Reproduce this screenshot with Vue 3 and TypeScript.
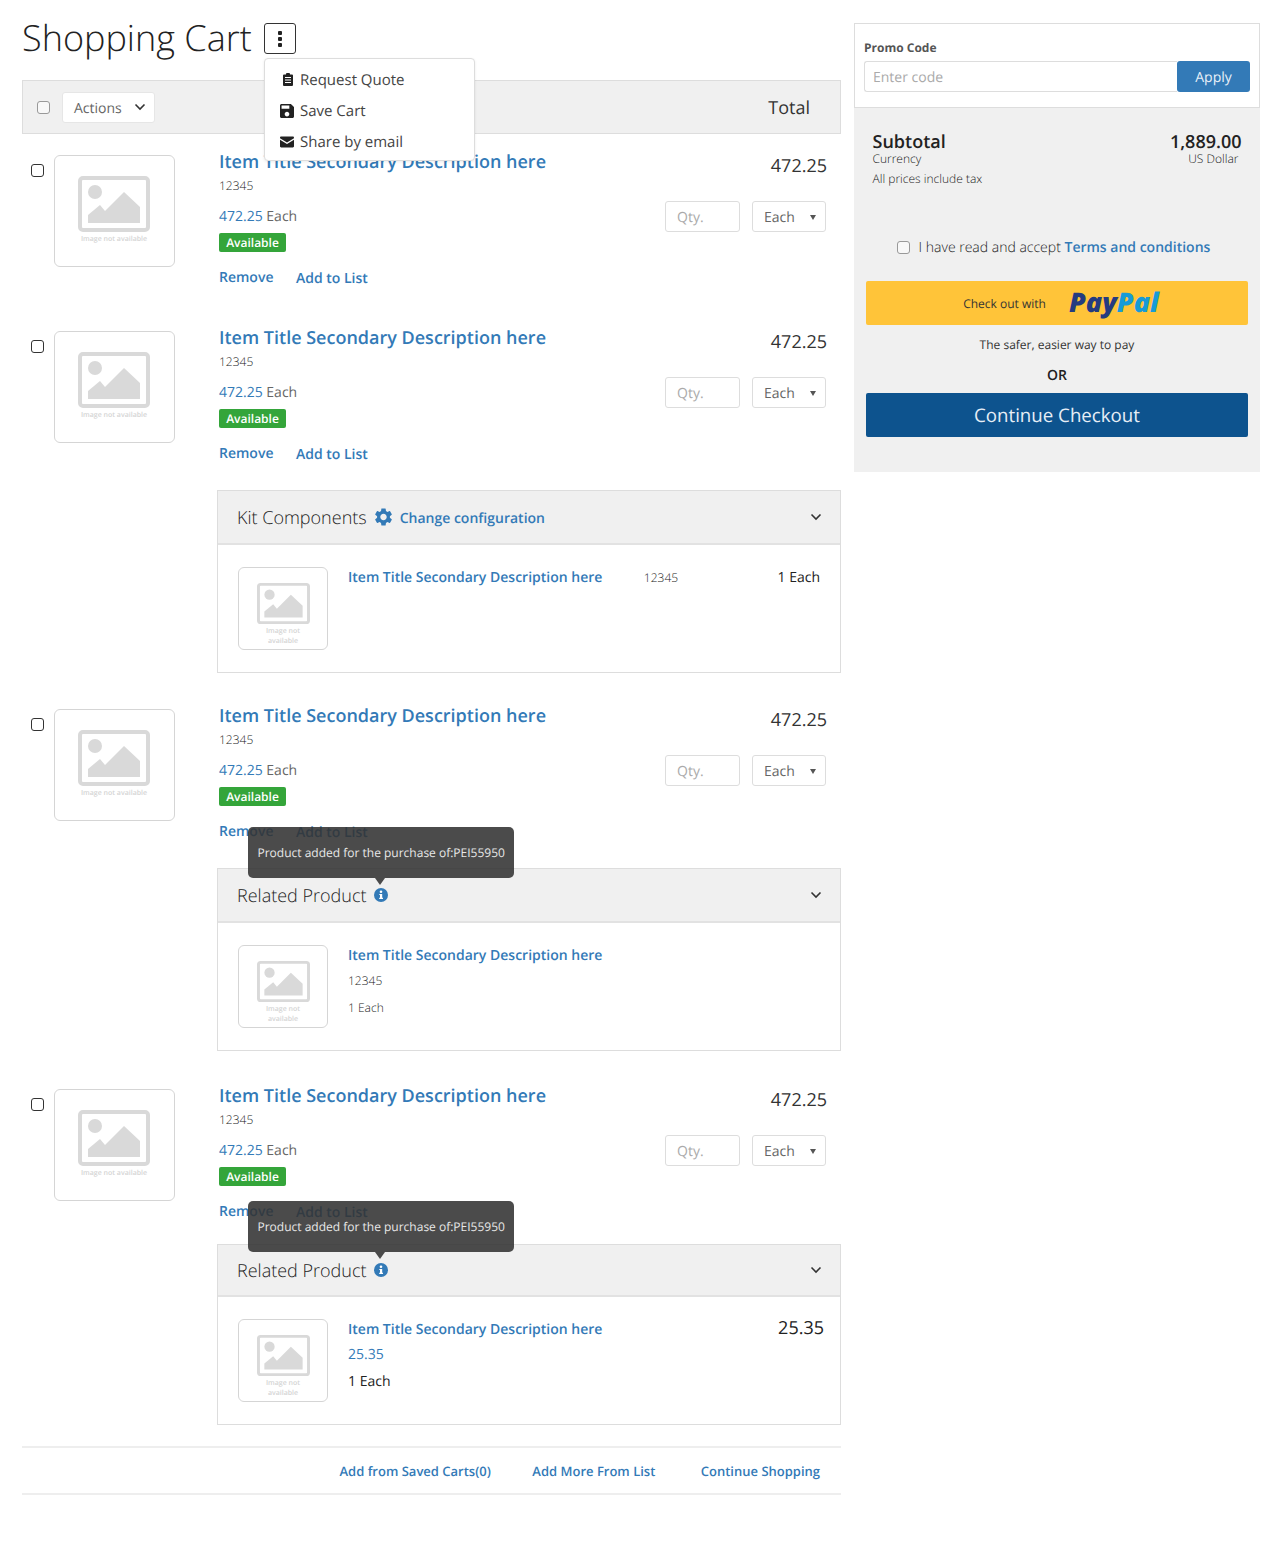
<script setup lang="ts">
type PanelRow = { id: string; lines: string[]; sku?: string; each?: string; price?: string }
type Panel = {
  kind: 'kit' | 'related' | 'priced'
  label: string
  row: PanelRow
}
type CartItem = { id: number; panel?: Panel }

const title = 'Item Title Secondary Description here'
const tipText = 'Product added for the purchase of:PEI55950'

const items: CartItem[] = [
  { id: 1 },
  {
    id: 2,
    panel: { kind: 'kit', label: 'Kit Components', row: { id: 'k', lines: [], sku: '12345', each: '1 Each' } },
  },
  {
    id: 3,
    panel: { kind: 'related', label: 'Related Product', row: { id: 'r', lines: ['12345', '1 Each'] } },
  },
  {
    id: 4,
    panel: { kind: 'priced', label: 'Related Product', row: { id: 'p', lines: ['25.35', '1 Each'], price: '25.35' } },
  },
]

const menu = ['Request Quote', 'Save Cart', 'Share by email']
const footerLinks = ['Add from Saved Carts(0)', 'Add More From List', 'Continue Shopping']
</script>

<template>
  <div class="page">
    <main class="cart">
      <header class="head">
        <h1>Shopping Cart</h1>
        <div class="menu-wrap">
          <button class="kebab" type="button" aria-label="More">
            <i /><i /><i />
          </button>
          <ul class="menu">
            <li v-for="(m, i) in menu" :key="m">
              <svg v-if="i === 0" class="mi mi-clip" viewBox="0 0 10 13">
                <path fill="#222" fill-rule="evenodd" d="M1 1.5h2V1a1 1 0 0 1 1-1h2a1 1 0 0 1 1 1v.5h2a1 1 0 0 1 1 1V12a1 1 0 0 1-1 1H1a1 1 0 0 1-1-1V2.500a1 1 0 0 1 1-1zM2 4v1h6V4zm0 2.500v1h6v-1zM2 9v1h6V9z" />
              </svg>
              <svg v-else-if="i === 1" class="mi" viewBox="3 3 18 18">
                <path fill="#222" d="M17 3H5c-1.110 0-2 .9-2 2v14c0 1.100.89 2 2 2h14c1.100 0 2-.9 2-2V7l-4-4zm-5 16c-1.660 0-3-1.340-3-3s1.340-3 3-3 3 1.340 3 3-1.340 3-3 3zm3-10H5V5h10v4z" />
              </svg>
              <svg v-else class="mi" viewBox="0 0 14 11">
                <path fill="#222" d="M1.200 0h11.600C13.500 0 14 .5 14 1.200v.5L7 6 0 1.700v-.5C0 .5.500 0 1.200 0zM0 3.300 7 7.600l7-4.300v6.500c0 .7-.5 1.200-1.200 1.200H1.200C.5 11 0 10.500 0 9.800z" />
              </svg>
              <span>{{ m }}</span>
            </li>
          </ul>
        </div>
      </header>

      <div class="toolbar">
        <input class="check check-soft" type="checkbox" />
        <div class="actions">
          <span>Actions</span>
          <svg class="chev" viewBox="0 0 12 8"><path d="M1.500 1.500 6 6l4.500-4.500" /></svg>
        </div>
        <span class="total-label">Total</span>
      </div>

      <template v-for="item in items" :key="item.id">
        <article class="item">
          <input class="check" type="checkbox" />
          <div class="thumb">
            <svg class="ph" viewBox="0 0 72 56">
              <rect x="2" y="2" width="68" height="52" rx="3" fill="none" stroke="#d9d9d9" stroke-width="4" />
              <circle cx="17" cy="16" r="7" fill="#d9d9d9" />
              <path fill="#d9d9d9" d="M10 47v-8l12-10 5 6 19-19 16 15v16z" />
            </svg>
            <span class="ph-text">Image not available</span>
          </div>
          <div class="info">
            <a class="item-title">{{ title }}</a>
            <div class="sku">12345</div>
            <div class="unit"><a>472.25</a> Each</div>
            <span class="badge">Available</span>
            <div class="links">
              <a class="remove">Remove</a>
              <a class="add">Add to List</a>
            </div>
          </div>
          <div class="side">
            <div class="line-total">472.25</div>
            <div class="controls">
              <input class="qty" type="text" placeholder="Qty." />
              <div class="uom">Each<b /></div>
            </div>
          </div>
        </article>

        <section v-if="item.panel" class="panel" :class="'panel-' + item.panel.kind">
          <div class="panel-head">
            <span class="panel-label">{{ item.panel.label }}</span>
            <template v-if="item.panel.kind === 'kit'">
              <svg class="gear" viewBox="2.500 2 19 20">
                <path fill="#337ab7" d="M19.140 12.940c.04-.3.06-.61.06-.94 0-.32-.02-.64-.07-.94l2.030-1.580a.49.49 0 0 0 .12-.61l-1.920-3.320a.488.488 0 0 0-.59-.22l-2.390.96c-.5-.38-1.030-.7-1.620-.94l-.36-2.540a.484.484 0 0 0-.48-.41h-3.840c-.24 0-.43.17-.47.41l-.36 2.540c-.59.24-1.130.57-1.620.94l-2.390-.96c-.22-.08-.47 0-.59.22L2.740 8.870c-.12.21-.08.47.12.61l2.030 1.580c-.05.3-.09.63-.09.94s.02.64.07.94l-2.030 1.580a.49.49 0 0 0-.12.61l1.920 3.320c.12.22.37.29.59.22l2.390-.96c.5.38 1.030.7 1.620.94l.36 2.540c.05.24.24.41.48.41h3.840c.24 0 .44-.17.47-.41l.36-2.540c.59-.24 1.130-.56 1.620-.94l2.390.96c.22.08.47 0 .59-.22l1.920-3.320c.12-.22.07-.47-.12-.61l-2.010-1.580zM12 15.600c-1.980 0-3.600-1.620-3.600-3.600s1.620-3.600 3.600-3.600 3.600 1.620 3.600 3.600-1.620 3.600-3.600 3.600z" />
              </svg>
              <a class="change">Change configuration</a>
            </template>
            <template v-else>
              <svg class="info-icon" viewBox="0 0 14 14">
                <circle cx="7" cy="7" r="7" fill="#337ab7" />
                <circle cx="7" cy="3.800" r="1.300" fill="#fff" />
                <path fill="#fff" d="M5.300 5.900h2.900v3.900h.8V11H5.200V9.800H6V7.100h-.7z" />
              </svg>
              <div class="tip">{{ tipText }}</div>
            </template>
            <svg class="chev chev-panel" viewBox="0 0 12 8"><path d="M1.500 1.500 6 6l4.500-4.500" /></svg>
          </div>
          <div class="panel-body">
            <div class="thumb thumb-sm">
              <svg class="ph" viewBox="0 0 72 56">
                <rect x="2" y="2" width="68" height="52" rx="3" fill="none" stroke="#d9d9d9" stroke-width="4" />
                <circle cx="17" cy="16" r="7" fill="#d9d9d9" />
                <path fill="#d9d9d9" d="M10 47v-8l12-10 5 6 19-19 16 15v16z" />
              </svg>
              <span class="ph-text">Image not available</span>
            </div>
            <div class="sub-info">
              <a class="sub-title">{{ title }}</a>
              <div v-for="(line, i) in item.panel.row.lines" :key="i" class="sub-line">{{ line }}</div>
            </div>
            <span v-if="item.panel.row.sku" class="sub-sku">{{ item.panel.row.sku }}</span>
            <span v-if="item.panel.row.each" class="sub-each">{{ item.panel.row.each }}</span>
            <span v-if="item.panel.row.price" class="sub-price">{{ item.panel.row.price }}</span>
          </div>
        </section>
      </template>

      <footer class="foot">
        <a v-for="l in footerLinks" :key="l">{{ l }}</a>
      </footer>
    </main>

    <aside class="summary">
      <div class="promo">
        <label class="promo-label">Promo Code</label>
        <div class="promo-row">
          <input type="text" placeholder="Enter code" />
          <button type="button">Apply</button>
        </div>
      </div>
      <div class="totals">
        <div class="sub-row">
          <div>
            <div class="sub-name">Subtotal</div>
            <div class="small">Currency</div>
          </div>
          <div class="right">
            <div class="sub-amt">1,889.00</div>
            <div class="small">US Dollar</div>
          </div>
        </div>
        <div class="small tax">All prices include tax</div>
        <label class="terms">
          <input class="check check-soft" type="checkbox" />
          <span>I have read and accept <a>Terms and conditions</a></span>
        </label>
        <button class="paypal" type="button">
          <span class="pp-text">Check out with</span>
          <span class="pp-logo"><em>Pay</em><em class="pal">Pal</em></span>
        </button>
        <p class="safer">The safer, easier way to pay</p>
        <p class="or">OR</p>
        <button class="checkout" type="button">Continue Checkout</button>
      </div>
    </aside>
  </div>
</template>

<style>
body {
  background: #fff;
}
</style>

<style scoped>
.page {
  display: flex;
  align-items: flex-start;
  gap: 13px;
  min-height: 1549px;
  box-sizing: border-box;
  padding-left: 22px;
  font-family: 'Open Sans', 'Liberation Sans', sans-serif;
  font-size: 14px;
  color: #555;
  text-rendering: geometricPrecision;
}

input,
button {
  text-rendering: geometricPrecision;
}

a {
  color: #337ab7;
}

.cart {
  width: 819px;
  flex: none;
}

.head {
  display: flex;
  align-items: flex-start;
  height: 80px;
}

h1 {
  flex: none;
  width: 229px;
  margin: 15px 0 0;
  font-size: 36px;
  line-height: 46px;
  font-weight: 300;
  color: #222;
  white-space: nowrap;
}

.menu-wrap {
  position: relative;
  margin: 23px 0 0 13px;
}

.kebab {
  display: flex;
  flex-direction: column;
  align-items: center;
  justify-content: center;
  gap: 2px;
  width: 32px;
  height: 31px;
  padding: 0;
  border: 1px solid #333;
  border-radius: 3px;
  background: #fff;
}

.kebab i {
  width: 4px;
  height: 4px;
  border-radius: 1px;
  background: #222;
}

.menu {
  position: absolute;
  z-index: 5;
  top: 35px;
  left: 0;
  box-sizing: border-box;
  width: 211px;
  height: 103px;
  margin: 0;
  padding: 5px 0 0 15px;
  list-style: none;
  background: #fff;
  border: 1px solid #ddd;
  border-radius: 4px;
  box-shadow: 0 1px 3px rgba(0, 0, 0, 0.08);
}

.menu li {
  display: flex;
  align-items: center;
  height: 31px;
  font-size: 15px;
  color: #444;
}

.mi {
  width: 14px;
  height: 14px;
  margin-right: 6px;
  flex: none;
}

.mi-clip {
  width: 10px;
  height: 13px;
  margin: 0 7px 0 3px;
}

.toolbar {
  display: flex;
  align-items: center;
  height: 54px;
  box-sizing: border-box;
  padding: 0 30px 0 14px;
  background: #f0f0f0;
  border: 1px solid #ddd;
}

.check {
  appearance: none;
  flex: none;
  width: 13px;
  height: 13px;
  margin: 0;
  background: #fff;
  border: 1.5px solid #333;
  border-radius: 3px;
}

.check-soft {
  border: 1px solid #999;
  background: #f8f8f8;
}

.actions {
  display: flex;
  align-items: center;
  justify-content: space-between;
  box-sizing: border-box;
  width: 93px;
  height: 31px;
  margin-left: 12px;
  padding: 0 8px 0 11px;
  background: #fff;
  border: 1px solid #e6e6e6;
  border-radius: 3px;
  color: #666;
}

.actions span {
  margin-top: 2px;
}

.chev {
  width: 12px;
  height: 8px;
  fill: none;
  stroke: #333;
  stroke-width: 1.6;
}

.total-label {
  margin: 2px 0 0 auto;
  font-size: 18px;
  color: #333;
}

.item {
  display: flex;
  box-sizing: border-box;
  height: 176px;
  padding: 21px 15px 0 9px;
}

.item > .check {
  margin-top: 9px;
}

.thumb {
  position: relative;
  display: flex;
  flex-direction: column;
  align-items: center;
  flex: none;
  box-sizing: border-box;
  width: 121px;
  height: 112px;
  margin-left: 9.5px;
  padding-top: 20px;
  background: #fff;
  border: 1px solid #d5d5d5;
  border-radius: 6px;
}

.ph {
  width: 72px;
  height: 56px;
}

.ph-text {
  margin-top: 3px;
  font-size: 7px;
  line-height: 10px;
  font-weight: 600;
  color: #d4d4d4;
  text-align: center;
}

.thumb-sm {
  width: 90px;
  height: 83px;
  margin-left: 0;
  padding-top: 14px;
}

.thumb-sm .ph {
  width: 53px;
  height: 43px;
}

.thumb-sm .ph-text {
  width: 60px;
  margin-top: 2px;
  line-height: 10px;
}

.info {
  flex: 1;
  margin-left: 44.5px;
}

.item-title {
  display: block;
  font-size: 18px;
  line-height: 14px;
  margin-top: 0;
  font-weight: 600;
}

.sku {
  margin-top: 9px;
  font-size: 12px;
  line-height: 16px;
  font-weight: 300;
  color: #222;
}

.unit {
  margin-top: 13px;
  line-height: 20px;
  color: #666;
}

.badge {
  display: block;
  width: 67px;
  height: 19px;
  margin-top: 6px;
  background: #34a53a;
  border-radius: 2px;
  color: #fff;
  font-size: 12px;
  line-height: 20px;
  font-weight: 600;
  text-align: center;
}

.links {
  display: flex;
  gap: 22.5px;
  margin-top: 16px;
  font-weight: 600;
  line-height: 20px;
}

.add {
  margin-top: 1px;
}

.side {
  flex: none;
  text-align: right;
}

.line-total {
  margin-top: 1px;
  margin-right: -1px;
  font-size: 18px;
  line-height: 20px;
  color: #333;
}

.controls {
  display: flex;
  gap: 12px;
  margin-top: 25px;
}

.qty {
  box-sizing: border-box;
  width: 75px;
  height: 31px;
  padding: 2px 11px 0;
  background: #fff;
  border: 1px solid #ddd;
  border-radius: 3px;
  font: inherit;
}

.qty::placeholder,
.promo-row input::placeholder {
  color: #aaa;
  opacity: 1;
}

.uom {
  display: flex;
  align-items: center;
  justify-content: space-between;
  box-sizing: border-box;
  width: 74px;
  height: 31px;
  padding: 2px 9px 0 11px;
  background: #fff;
  border: 1px solid #ddd;
  border-radius: 3px;
  color: #666;
}

.uom b {
  border: 3px solid transparent;
  border-top: 5px solid #555;
  border-bottom: 0;
}

.panel {
  width: 624px;
  box-sizing: border-box;
  margin-left: 195px;
  background: #fff;
  border: 1px solid #ddd;
}

.panel-kit {
  margin-top: 4px;
  margin-bottom: 15px;
  height: 183px;
}

.panel-related {
  margin-top: 4px;
  margin-bottom: 17px;
  height: 183px;
}

.panel-priced {
  height: 181px;
  margin-bottom: 21px;
}

.panel-head {
  position: relative;
  display: flex;
  align-items: center;
  box-sizing: border-box;
  height: 54px;
  padding: 0 19px;
  background: #f0f0f0;
  border-bottom: 2px solid #e2e2e2;
}

.panel-priced .panel-head {
  height: 52px;
}

.panel-label {
  margin-top: 2px;
  font-size: 18px;
  font-weight: 300;
  color: #222;
}

.gear {
  width: 17px;
  height: 18px;
  margin-left: 8px;
}

.change {
  margin: 2px 0 0 8px;
  font-weight: 600;
}

.info-icon {
  width: 14px;
  height: 14px;
  margin-left: 7px;
}

.tip {
  position: absolute;
  z-index: 3;
  top: -42px;
  left: 30px;
  box-sizing: border-box;
  width: 266px;
  height: 51px;
  padding: 16px 9.5px 0;
  background: rgba(50, 50, 50, 0.88);
  border-radius: 5px;
  color: #e8e8e8;
  font-size: 12px;
  line-height: 20px;
  white-space: nowrap;
}

.panel-priced .tip {
  top: -44px;
  padding-top: 16px;
}

.tip::after {
  content: '';
  position: absolute;
  top: 100%;
  left: 127px;
  border: 5px solid transparent;
  border-top: 7px solid rgba(50, 50, 50, 0.88);
  border-bottom: 0;
}

.chev-panel {
  margin-left: auto;
  margin-right: -1px;
}

.panel-body {
  display: flex;
  align-items: flex-start;
  padding: 22px 20px 0;
}

.sub-info {
  margin-left: 20px;
  padding-top: 1px;
}

.sub-title {
  display: block;
  font-weight: 600;
  line-height: 20px;
}

.sub-line {
  margin-top: 7px;
  font-size: 12px;
  line-height: 20px;
  font-weight: 300;
  color: #222;
}

.sub-line:first-of-type {
  margin-top: 5px;
}

.panel-priced .sub-line {
  font-size: 14px;
  font-weight: 400;
  color: #222;
}

.panel-priced .sub-line:first-of-type {
  color: #337ab7;
}

.sub-sku {
  margin: 1px 0 0 41.5px;
  font-size: 12px;
  line-height: 20px;
  font-weight: 300;
  color: #222;
}

.sub-each {
  margin: 1px 0 0 auto;
  line-height: 20px;
  color: #222;
}

.sub-price {
  margin: -1px -4px 0 auto;
  font-size: 18px;
  line-height: 20px;
  color: #222;
}

.foot {
  display: flex;
  justify-content: flex-end;
  align-items: center;
  gap: 41.5px;
  box-sizing: border-box;
  height: 49px;
  padding: 1px 21px 0 0;
  border-top: 2px solid #eee;
  border-bottom: 2px solid #eee;
  font-weight: 600;
  font-size: 13px;
}

.foot a:last-child {
  margin-left: 4px;
}

.summary {
  flex: none;
  width: 406px;
  margin-top: 23px;
}

.promo {
  box-sizing: border-box;
  height: 85px;
  padding: 17px 9px 0;
  background: #fff;
  border: 1px solid #ddd;
}

.promo-label {
  display: block;
  font-size: 12px;
  line-height: 14px;
  font-weight: 700;
  color: #555;
}

.promo-row {
  display: flex;
  margin-top: 6px;
}

.promo-row input {
  flex: 1;
  min-width: 0;
  box-sizing: border-box;
  height: 31px;
  padding: 2px 8px 0;
  background: #fff;
  border: 1px solid #ddd;
  border-right: 0;
  border-radius: 3px 0 0 3px;
  font: inherit;
}

.promo-row button {
  width: 73px;
  height: 31px;
  padding: 2px 0 0;
  background: #337ab7;
  border: 0;
  border-radius: 3px;
  color: #e8f0f8;
  font: inherit;
}

.totals {
  box-sizing: border-box;
  height: 364px;
  padding: 24px 12px 0;
  background: #f0f0f0;
}

.sub-row {
  display: flex;
  justify-content: space-between;
  padding: 0 6.5px;
}

.sub-name,
.sub-amt {
  font-size: 18px;
  line-height: 20px;
  font-weight: 600;
  color: #222;
}

.small {
  font-size: 12px;
  line-height: 14px;
  font-weight: 300;
  color: #222;
}

.right {
  text-align: right;
}

.right .small {
  padding-right: 3px;
}

.tax {
  margin-top: 6px;
  padding-left: 6.500px;
}

.terms {
  display: flex;
  align-items: center;
  justify-content: center;
  gap: 9px;
  margin-top: 52px;
  padding-right: 7px;
  line-height: 20px;
  font-weight: 300;
  color: #222;
}

.terms .check {
  margin-top: -2px;
}

.terms a {
  font-weight: 600;
}

.paypal {
  display: flex;
  align-items: center;
  justify-content: center;
  gap: 23px;
  width: 100%;
  height: 44px;
  margin-top: 23px;
  padding: 0 0 0 8px;
  background: #ffc439;
  border: 0;
  border-radius: 2px;
  font-family: inherit;
}

.pp-text {
  font-size: 12px;
  color: #333;
}

.pp-logo {
  margin-top: -2px;
  font-size: 27px;
  font-weight: 800;
  line-height: 30px;
  color: #253b80;
}

.pal {
  color: #179bd7;
}

.safer {
  margin: 12px 0 0;
  font-size: 12px;
  line-height: 16px;
  text-align: center;
  color: #333;
}

.or {
  margin: 14px 0 0;
  font-size: 14px;
  line-height: 18px;
  font-weight: 600;
  text-align: center;
  color: #222;
}

.checkout {
  width: 100%;
  height: 44px;
  margin-top: 8px;
  padding: 0;
  background: #0d538e;
  border: 0;
  border-radius: 2px;
  color: #e6eef6;
  font-family: inherit;
  font-size: 18.7px;
  font-weight: 500;
}
</style>
